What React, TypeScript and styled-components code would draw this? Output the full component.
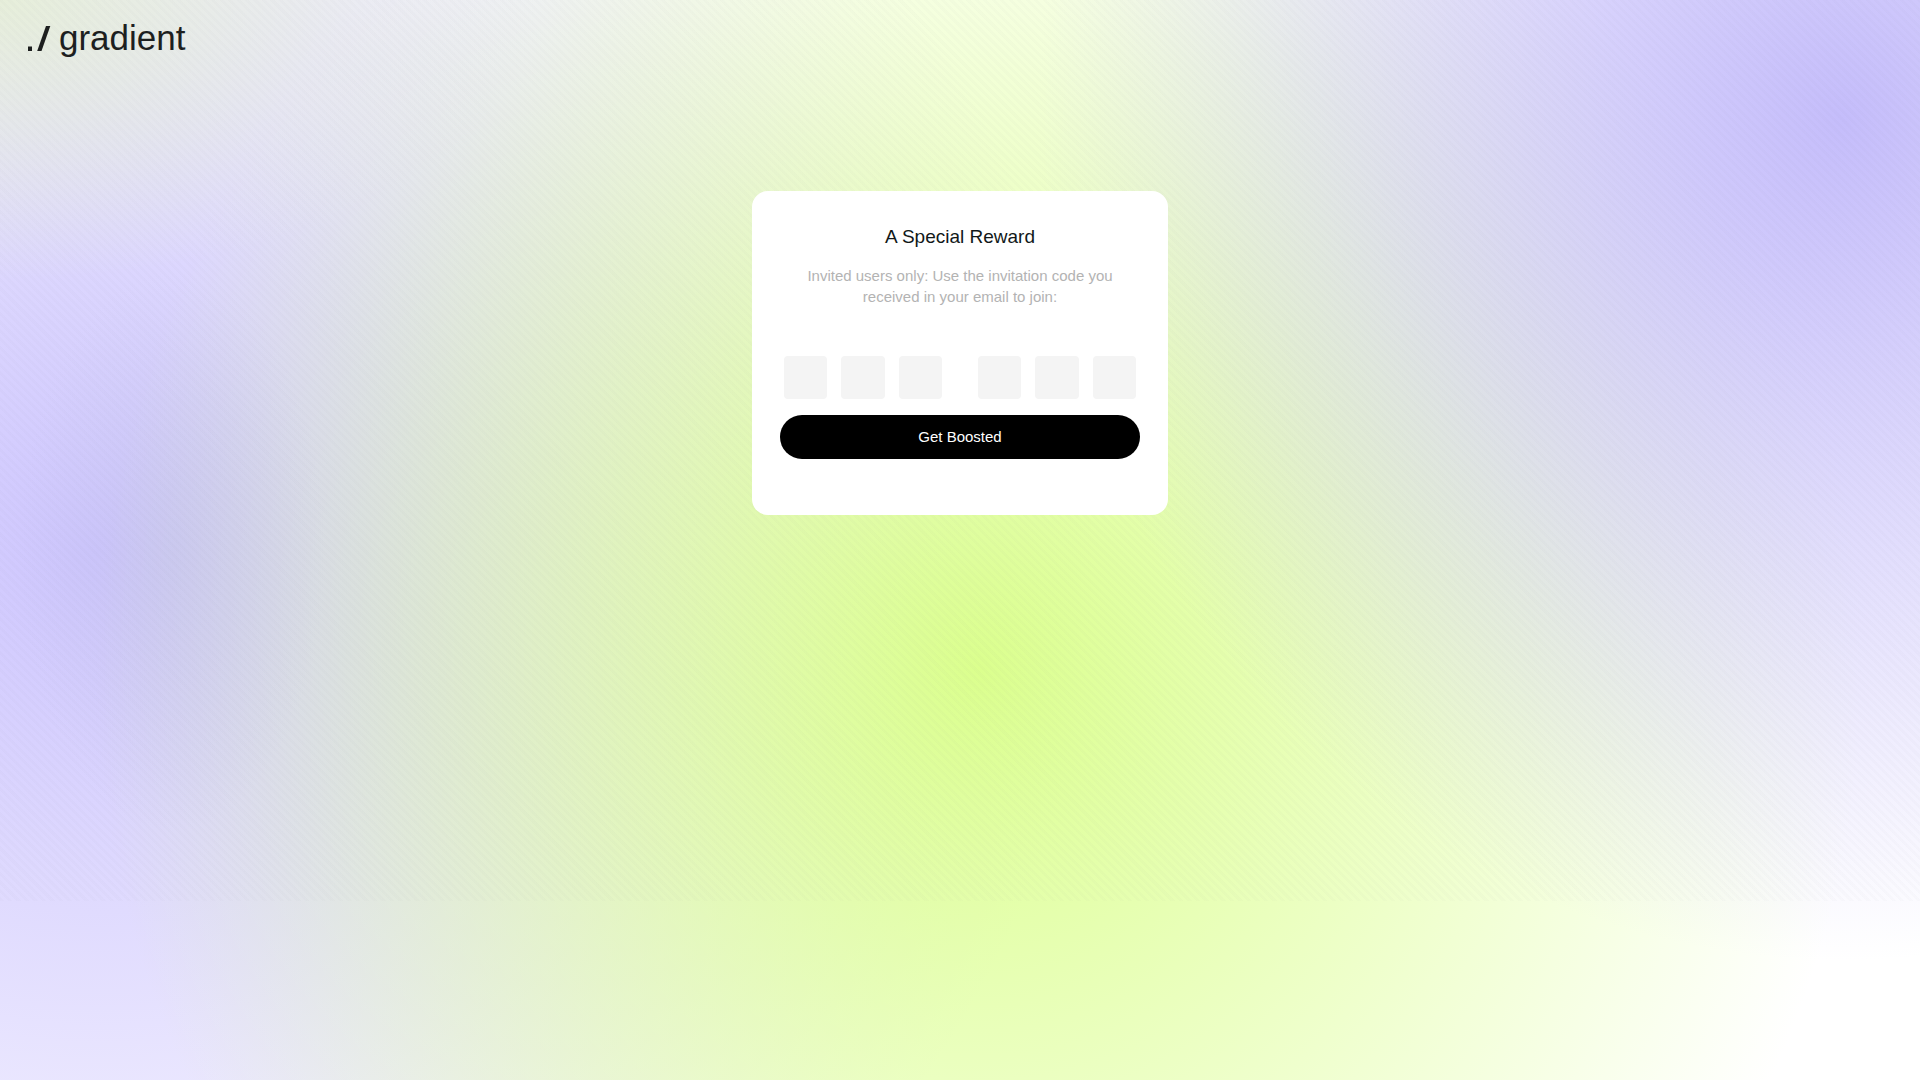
import React, { useState } from "react";
import styled, { createGlobalStyle } from "styled-components";

const GlobalStyle = createGlobalStyle`
  *, *::before, *::after { box-sizing: border-box; }
  body { margin: 0; background: #fff; }
  h1, p { margin: 0; }
`;

const Page = styled.div`
  display: flex;
  flex-direction: column;
  min-height: 100vh;
  font-family: "Liberation Sans", Arial, Helvetica, sans-serif;
  color: #111819;
  background:
    repeating-linear-gradient(45deg, rgba(110, 110, 130, 0.022) 0 3px, transparent 3px 6px) top / 100% 901px no-repeat,
    radial-gradient(ellipse 8% 26% at 9% 51%, rgba(186, 190, 222, 0.3), rgba(186, 190, 222, 0)),
    radial-gradient(ellipse 28% 26% at 0% 0%, rgba(230, 240, 212, 0.85), rgba(230, 240, 212, 0)),
    radial-gradient(ellipse 42% 78% at 96% 11%, #c5bdfb 0%, rgba(197, 189, 251, 0.52) 50%, rgba(197, 189, 251, 0) 100%),
    radial-gradient(ellipse 46% 86% at 51% 62%, #dbff8e 0%, rgba(219, 255, 142, 0) 100%),
    radial-gradient(ellipse 52% 88% at 5% 51%, #cdc5fe 0%, rgba(205, 197, 254, 0) 100%),
    #fff;
`;

const Header = styled.header`
  display: flex;
  padding: 18px 28px 0;
`;

const Brand = styled.a`
  display: flex;
  align-items: center;
  gap: 8px;
  font-size: 35px;
  line-height: 40px;
  color: #1d1f1f;
  text-decoration: none;
`;

const Main = styled.main`
  display: flex;
  justify-content: center;
  padding: 133px 16px 32px;
`;

const Card = styled.form`
  display: flex;
  flex-direction: column;
  width: 100%;
  max-width: 416px;
  padding: 32px 28px 56px;
  border-radius: 16px;
  background: #fff;
  text-align: center;
`;

const Title = styled.h1`
  font-size: 19px;
  line-height: 28px;
  font-weight: 400;
`;

const Lead = styled.p`
  padding: 14px 16px 0;
  font-size: 15px;
  line-height: 21px;
  color: #b3b3b3;
`;

const Code = styled.div`
  display: flex;
  gap: 36px;
  padding: 49px 4px 16px;
`;

const CodeGroup = styled.div`
  display: flex;
  flex: 1;
  gap: 14px;
`;

const Digit = styled.input`
  flex: 1;
  width: 0;
  min-width: 0;
  aspect-ratio: 1;
  padding: 0;
  border: 0;
  border-radius: 4px;
  background: #f4f4f4;
  color: inherit;
  font: inherit;
  font-size: 19px;
  text-align: center;
`;

const Submit = styled.button`
  height: 44px;
  padding: 0 24px 2px;
  border: 0;
  border-radius: 22px;
  background: #000;
  color: #fff;
  font: inherit;
  font-size: 15px;
  cursor: pointer;
`;

const groups = [[0, 1, 2], [3, 4, 5]];

export default function App() {
  const [code, setCode] = useState<string[]>(Array(6).fill(""));
  const update = (index: number, value: string) =>
    setCode(code.map((c, i) => (i === index ? value.slice(-1) : c)));

  return (
    <>
      <GlobalStyle />
      <Page>
        <Header>
          <Brand href="#">
            <svg width="23" height="26" viewBox="0 0 23 26" fill="currentColor" aria-hidden="true">
              <path d="M0 21.5h4V26H0z" />
              <path d="M18 1h4.300L13.500 26H9.200z" />
            </svg>
            <span>gradient</span>
          </Brand>
        </Header>
        <Main>
          <Card onSubmit={(e) => e.preventDefault()}>
            <Title>A Special Reward</Title>
            <Lead>Invited users only: Use the invitation code you received in your email to join:</Lead>
            <Code>
              {groups.map((group) => (
                <CodeGroup key={group[0]}>
                  {group.map((i) => (
                    <Digit
                      key={i}
                      aria-label={`Code character ${i + 1}`}
                      value={code[i]}
                      onChange={(e) => update(i, e.target.value)}
                    />
                  ))}
                </CodeGroup>
              ))}
            </Code>
            <Submit type="submit">Get Boosted</Submit>
          </Card>
        </Main>
      </Page>
    </>
  );
}
